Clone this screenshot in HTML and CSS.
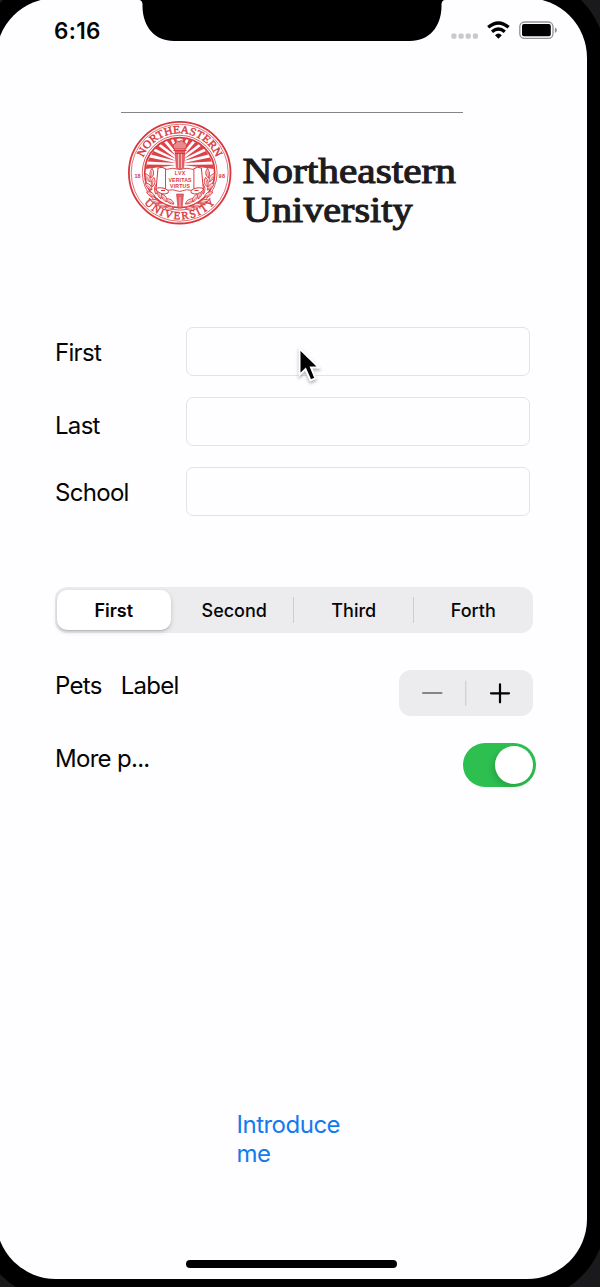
FILE: index.html
```html
<!DOCTYPE html>
<html lang="en">
<head>
<meta charset="utf-8">
<title>Introduce me</title>
<link rel="stylesheet" href="styles.css">
</head>
<body>
<div class="device">
<div class="screen">
  <header class="status">
    <span class="time">6:16</span>
    <svg class="status-icons" viewBox="450 18 108 24" width="108" height="24">
      <g fill="#c9c8ca"><rect x="451.3" y="33.5" width="5.2" height="5.2" rx="1.6"/><rect x="458.5" y="33.5" width="5.2" height="5.2" rx="1.6"/><rect x="465.6" y="33.5" width="5.2" height="5.2" rx="1.6"/><rect x="472.8" y="33.5" width="5.2" height="5.2" rx="1.6"/></g>
      <g fill="none" stroke="#000" stroke-width="3.3"><path d="M488.200 27.200Q498.400 18.700 508.600 27.200"/><path d="M492 31.700Q498.400 26.300 504.800 31.700"/></g>
      <path d="M498.400 38.800L495 35.200Q498.400 32 501.800 35.200Z"/>
      <rect x="519.800" y="22" width="33.200" height="16.300" rx="4.600" fill="#fefdff" stroke="#919092" stroke-width="1.300"/>
      <rect x="522" y="24.100" width="28.800" height="12.100" rx="2"/>
      <path d="M554.900 27.500Q556.900 28.300 556.900 30.200Q556.900 32 554.900 32.900Z" fill="#8f8e90"/>
    </svg>
  </header>
  <svg class="logo" viewBox="120 110 344 122" width="344" height="122">
    <defs>
      <path id="top-arc" d="M140.200 172.700A39.500 39.500 0 0 1 219.200 172.700"/>
      <path id="bottom-arc" d="M133 172.700A46.700 46.700 0 0 0 226.400 172.700"/>
      <g id="leaf"><path d="M0 0Q-5-3-4-9Q2-6 0 0Z" fill="#fbdfe0" stroke="#dc4a4e" stroke-width=".9"/><path d="M0 0L-3-6" stroke="#dc4a4e" stroke-width=".6"/></g>
      <g id="branch">
        <use href="#leaf" transform="translate(174 208) rotate(-75)"/><use href="#leaf" transform="translate(174 204) rotate(-35)"/>
        <use href="#leaf" transform="translate(167 206) rotate(-60)"/><use href="#leaf" transform="translate(167 202) rotate(-12)"/>
        <use href="#leaf" transform="translate(160 203) rotate(-50)"/><use href="#leaf" transform="translate(161 199) rotate(5)"/>
        <use href="#leaf" transform="translate(155 197) rotate(-35)"/><use href="#leaf" transform="translate(156 194) rotate(25)"/>
        <use href="#leaf" transform="translate(152 190) rotate(-20)"/><use href="#leaf" transform="translate(152 187) rotate(35)"/>
        <use href="#leaf" transform="translate(150 182) rotate(-5)"/><use href="#leaf" transform="translate(151 178) rotate(30)"/>
      </g>
    </defs>
    <path d="M121 112.500H463" stroke="#858487" stroke-width="1"/>
    <g fill="none" stroke="#d9373b">
      <circle cx="179.700" cy="172.700" r="50.800" stroke-width="1.800"/>
      <circle cx="179.700" cy="172.700" r="48.500" stroke-width=".7"/>
      <circle cx="179.700" cy="172.700" r="37.400" stroke-width=".8"/>
      <circle cx="179.700" cy="172.700" r="35" stroke-width="1.700"/>
    </g>
    <g id="rays" fill="#dc4247">
      <path d="M176 165L145.500 169L146.500 164.500ZM176 163L147.500 161.500L149.500 157.500ZM176 161L151 154.500L153.500 151ZM176 159L155 148.500L158 145.500ZM176 156L160.500 144L164 142ZM176 152L166.500 140.500L170.500 139ZM176 145L173 138.500L177 138Z"/>
      <path d="M183.400 165L213.900 169L212.900 164.500ZM183.400 163L211.900 161.500L209.900 157.500ZM183.400 161L208.400 154.500L205.900 151ZM183.400 159L204.400 148.500L201.400 145.500ZM183.400 156L198.900 144L195.400 142ZM183.400 152L192.900 140.500L188.900 139ZM183.400 145L186.400 138.500L182.400 138Z"/>
    </g>
    <use href="#branch"/><use href="#branch" transform="matrix(-1 0 0 1 359.400 0)"/>
    <path d="M175 151H185L183.500 170H176.500ZM176.500 194H183.500L182 208H178Z" fill="#e26468" stroke="#d9373b" stroke-width=".6"/>
    <path d="M174 149Q171.500 144 176 143Q175 140 179 141.500Q182 139 184 142.500Q188.500 143.500 185.500 149Z" fill="#ea898c" stroke="#d9373b" stroke-width="1"/>
    <path d="M173.500 150.300H186.500M175 153.500H185" stroke="#d9373b" stroke-width="1.200"/>
    <path d="M178.500 154V168M181.500 154V168M180 197V207" stroke="#fbe3e4" stroke-width=".7"/>
    <path d="M158 168Q162 166 166 169V190Q160 188 156 190ZM201.400 168Q197.400 166 193.400 169V190Q199.400 188 203.400 190Z" fill="#fff" stroke="#d9373b" stroke-width="1"/>
    <path d="M165.500 169.500Q173 167 179.700 169.500Q187 167 193.900 169.500V190.500Q186 188.500 179.700 191.500Q173 188.500 165.500 190.500Z" fill="#fff" stroke="#d9373b" stroke-width=".9"/>
    <path d="M156 190Q156 187 163 188Q170 190 168 193Q162 196 156 190ZM203.400 190Q203.400 187 196.400 188Q189.400 190 191.400 193Q197.400 196 203.400 190Z" fill="#fff" stroke="#d9373b" stroke-width="1"/>
    <path d="M161 190.500H165M194.500 190.500H198.500" stroke="#d9373b" stroke-width="1.200"/>
    <g class="seal-book" text-anchor="middle">
      <text x="180" y="175.400" textLength="10.500">LVX</text>
      <text x="180" y="181.500" textLength="23">VERITAS</text>
      <text x="180" y="187.500" textLength="20">VIRTUS</text>
    </g>
    <g class="seal-year"><text x="134.600" y="177.800" textLength="6">18</text><text x="218.600" y="177.800" textLength="6.500">98</text></g>
    <g class="seal-ring" text-anchor="middle">
      <text textLength="93" lengthAdjust="spacingAndGlyphs"><textPath href="#top-arc" startOffset="50%">NORTHEASTERN</textPath></text>
      <text textLength="81"><textPath href="#bottom-arc" startOffset="50%">UNIVERSITY</textPath></text>
    </g>
    <g class="wordmark">
      <text x="242.500" y="183.300" textLength="213.500" lengthAdjust="spacingAndGlyphs">Northeastern</text>
      <text x="243" y="221.700" textLength="169.500" lengthAdjust="spacingAndGlyphs">University</text>
    </g>
  </svg>
  <main class="content">
    <form class="fields">
      <label class="label" for="first">First</label><input class="field" id="first">
      <label class="label drop" for="last">Last</label><input class="field" id="last">
      <label class="label" for="school">School</label><input class="field" id="school">
    </form>
    <div class="segments">
      <span class="segment selected">First</span>
      <span class="segment">Second</span>
      <span class="segment divided">Third</span>
      <span class="segment divided">Forth</span>
    </div>
    <div class="row pets">
      <span class="label">Pets</span><span class="label value">Label</span>
      <div class="stepper">
        <svg viewBox="0 0 134 46" width="134" height="46" fill="none" stroke-linecap="round">
          <path d="M24 23H42.500" stroke="#858487" stroke-width="2.100"/>
          <path d="M66.700 11V35.500" stroke="#cfced1" stroke-width="1.200"/>
          <path d="M92 23.300H110M101 14.300V32.300" stroke="#000" stroke-width="2.200"/>
        </svg>
      </div>
    </div>
    <div class="row more">
      <span class="label">More p...</span>
      <span class="switch"><span class="knob"></span></span>
    </div>
    <button class="introduce">Introduce<br>me</button>
  </main>
  <div class="home"></div>
</div>
<svg class="notch" viewBox="0 0 312 42" width="312" height="42"><path d="M0 0H3Q6 0 6.500 4V7C7 27 19 41 38 41H274C293 41 305 27 305.500 7V4Q306 0 309 0H312Z"/></svg>
<svg class="cursor" viewBox="0 0 30 42" width="30" height="42"><path d="M4.500 4.500V31L10.500 25.300L15.500 36.500L20.500 34.300L16 23.500H24Z" fill="#000" stroke="#fff" stroke-width="2"/></svg>
</div>
</body>
</html>
```
FILE: styles.css
```css
* { box-sizing: border-box; }
body { margin: 0; background: #1a191b; font-family: Inter, "Liberation Sans", sans-serif; color: #050505; }
.device { position: relative; width: 600px; height: 1287px; overflow: hidden; }
.device::before { content: ""; position: absolute; inset: -24px -6px -14px -22px; background: #000; border-radius: 84px; }
.screen { position: relative; display: flex; flex-direction: column; width: 591px; height: 1281px; margin: -2px 0 0 -4px; padding: 2px 0 0 4px; background: #fefdff; border-radius: 60px; }
.status { display: flex; justify-content: space-between; height: 110px; padding: 18px 29px 0 54px; }
.status-icons { flex: none; }
.time { font-size: 22.5px; font-weight: 600; line-height: 25px; letter-spacing: 0.3px; }
.logo { display: block; flex: none; margin-left: 120px; }
.wordmark { font: 36.5px "Liberation Serif", serif; fill: #1d1b1d; stroke: #1d1b1d; stroke-width: 1.1px; }
.seal-ring { font: 11px "Liberation Serif", serif; fill: #d9373b; stroke: #d9373b; stroke-width: 0.4px; }
.seal-book { font: bold 5.2px "Liberation Sans", sans-serif; fill: #d9373b; }
.seal-year { font: bold 5.5px "Liberation Sans", sans-serif; fill: #d9373b; }
.content { display: flex; flex-direction: column; padding: 95px 51px 0 55px; }
.fields { display: grid; grid-template-columns: 131px 344px; row-gap: 21px; margin: 0; }
.label { position: relative; font-size: 24px; line-height: 32px; letter-spacing: -0.7px; white-space: nowrap; }
.fields .label { padding-top: 10px; }
.fields .drop { padding-top: 13px; }
.field { width: 344px; height: 49px; padding: 0 10px; border: 1px solid #e3e2e6; border-radius: 7px; background: #fefdff; font: inherit; outline: none; }
.segments { display: grid; grid-template-columns: repeat(4, 1fr); width: 478px; height: 46px; margin-top: 71px; background: #ecebed; border-radius: 12px; }
.segment { position: relative; display: grid; place-items: center; font-size: 18px; font-weight: 500; letter-spacing: 0; }
.selected { margin: 3px 4px 3px 2px; background: #fff; border-radius: 10px; font-weight: 600; box-shadow: 0 2px 5px rgba(0,0,0,.16), 0 1px 1px rgba(0,0,0,.12); }
.divided::before { content: ""; position: absolute; left: -1px; top: 10px; width: 1px; height: 26px; background: #ceccd0; }
.row { display: flex; align-items: flex-start; }
.pets { margin-top: 37px; height: 73px; }
.value { margin-left: 19px; }
.stepper { width: 134px; height: 46px; margin-left: auto; margin-right: 3px; border-radius: 12px; background: #ecebed; }
.stepper svg { display: block; }
.more { height: 44px; }
.switch { display: flex; justify-content: flex-end; width: 73px; height: 44px; margin-left: auto; padding: 3px; border-radius: 22px; background: #2dbf50; }
.knob { width: 38px; height: 38px; border-radius: 50%; background: #fff; box-shadow: -2px 3px 6px rgba(0,0,0,.15); }
.introduce { width: 110px; margin: 323px 0 0 181.5px; padding: 0; border: 0; background: none; color: #147bee; font: 24px/29px Inter, sans-serif; letter-spacing: -0.5px; text-align: left; }
.home { width: 211px; height: 8px; margin: auto 0 11px 186px; border-radius: 4px; background: #000; }
.notch { position: absolute; top: 0; left: 135.5px; }
.cursor { position: absolute; left: 294.500px; top: 344px; filter: drop-shadow(0 2px 1.5px rgba(0,0,0,.3)); }
```
